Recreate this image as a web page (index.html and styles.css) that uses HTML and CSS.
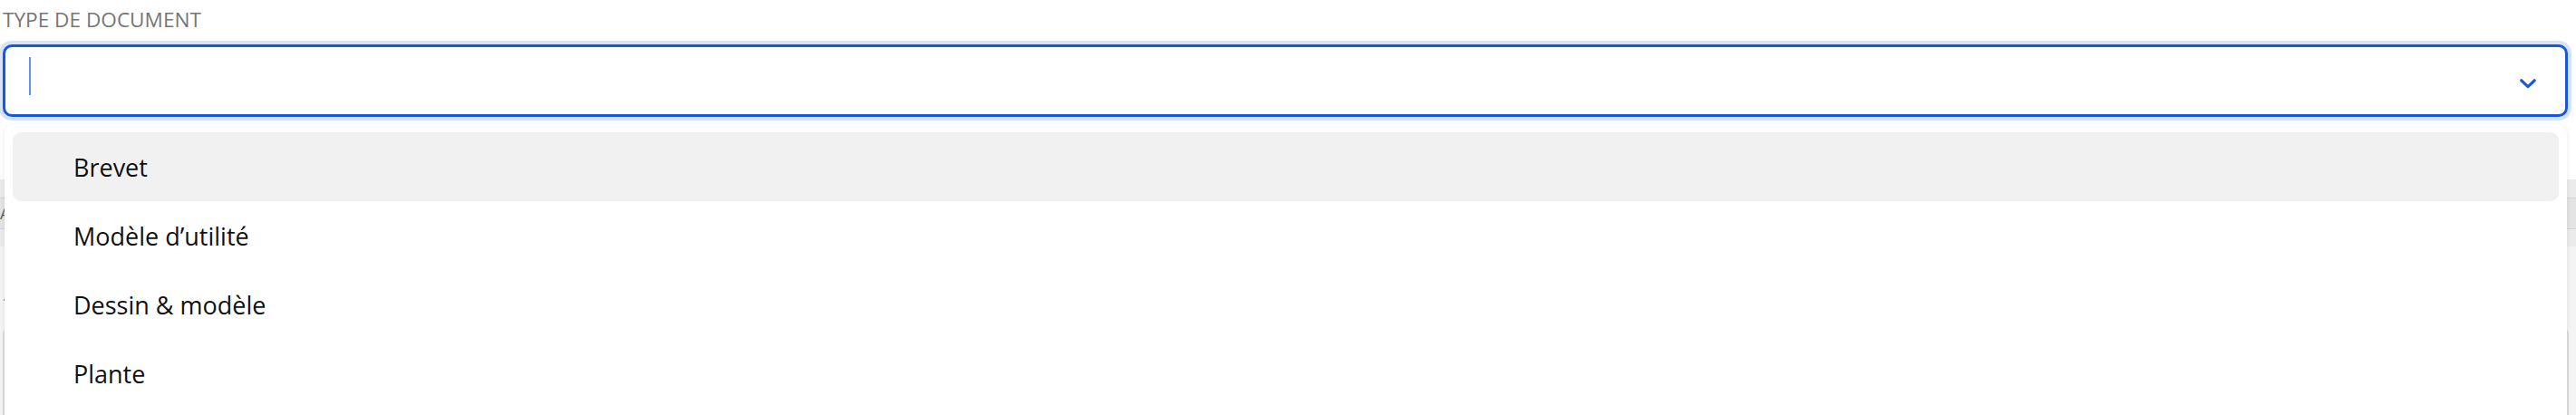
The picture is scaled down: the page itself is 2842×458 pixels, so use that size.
FILE: index.html
```html
<!DOCTYPE html>
<html lang="fr">
<head>
<meta charset="utf-8">
<title>Type de document</title>
<link rel="stylesheet" href="styles.css">
</head>
<body>
<div class="page">
  <div class="field">
    <label class="field-label">TYPE DE DOCUMENT</label>
    <div class="control">
      <span class="caret"></span>
      <svg class="chevron" width="18" height="11" viewBox="0 0 18 11" aria-hidden="true">
        <polyline points="1.8,1.8 9,8.6 16.2,1.8" fill="none" stroke="#1a57d8" stroke-width="3.2" stroke-linecap="round" stroke-linejoin="round"/>
      </svg>
    </div>
  </div>

  <div class="backdrop">
    <div class="backdrop-bar">
      <div class="backdrop-row"><span class="backdrop-text">A</span></div>
    </div>
    <div class="backdrop-dot">.</div>
    <div class="backdrop-card"></div>
  </div>

  <ul class="menu">
    <li class="option option-active">Brevet</li>
    <li class="option">Modèle d’utilité</li>
    <li class="option">Dessin &amp; modèle</li>
    <li class="option">Plante</li>
  </ul>
</div>
</body>
</html>
```

FILE: styles.css
```css
* { box-sizing: border-box; }

html, body {
  margin: 0;
  padding: 0;
  background: #ffffff;
  overflow: hidden;
}

body {
  font-family: "Open Sans", "Liberation Sans", sans-serif;
  color: #111111;
}

.page {
  position: relative;
  width: 2842px;
  height: 458px;
  overflow: hidden;
}

.field {
  padding: 7px 9px 0 3px;
}

.field-label {
  display: block;
  font-size: 22.6px;
  line-height: 30px;
  color: #767676;
  margin-bottom: 12px;
}

.control {
  height: 80px;
  border: 3px solid #1a57d8;
  border-radius: 10px;
  background: #ffffff;
  box-shadow: 0 0 0 4px #d5e4fb;
  display: flex;
  align-items: center;
  justify-content: space-between;
  padding: 0 32px 0 26px;
}

.caret {
  width: 2px;
  height: 42px;
  background: #5f93ea;
  margin-bottom: 10px;
}

.chevron {
  display: block;
  margin-top: 6px;
}

.backdrop {
  margin-top: 69px;
  background: #f4f4f4;
  height: 260px;
}

.backdrop-bar {
  height: 74px;
  background: #ebebeb;
  padding-top: 20px;
}

.backdrop-row {
  height: 35px;
  border-top: 1px solid #d2d2d2;
  border-bottom: 1px solid #d2d2d2;
  background: #e4e4e4;
  display: flex;
  align-items: center;
}

.backdrop-text {
  font-size: 17px;
  color: #555555;
  margin-left: 0;
}

.backdrop-dot {
  height: 20px;
  font-size: 16px;
  line-height: 20px;
  color: #555555;
  padding-left: 3px;
  margin-top: 44px;
}

.backdrop-card {
  margin: 26px 8px 0 3px;
  height: 140px;
  background: #ffffff;
  border: 2px solid #dcdcdc;
  border-bottom: none;
  border-radius: 6px 6px 0 0;
}

.menu {
  position: absolute;
  left: 5px;
  top: 137px;
  width: 2827px;
  margin: 0;
  padding: 9px 9px 40px;
  list-style: none;
  background: #ffffff;
  border-radius: 10px;
  box-shadow: 0 2px 6px rgba(0, 0, 0, 0.08), 0 0 1px rgba(0, 0, 0, 0.06);
}

.option {
  height: 76px;
  display: flex;
  align-items: center;
  padding-left: 67px;
  font-size: 27px;
  color: #111111;
  border-radius: 9px;
}

.option-active {
  background: #f1f1f1;
}
```
